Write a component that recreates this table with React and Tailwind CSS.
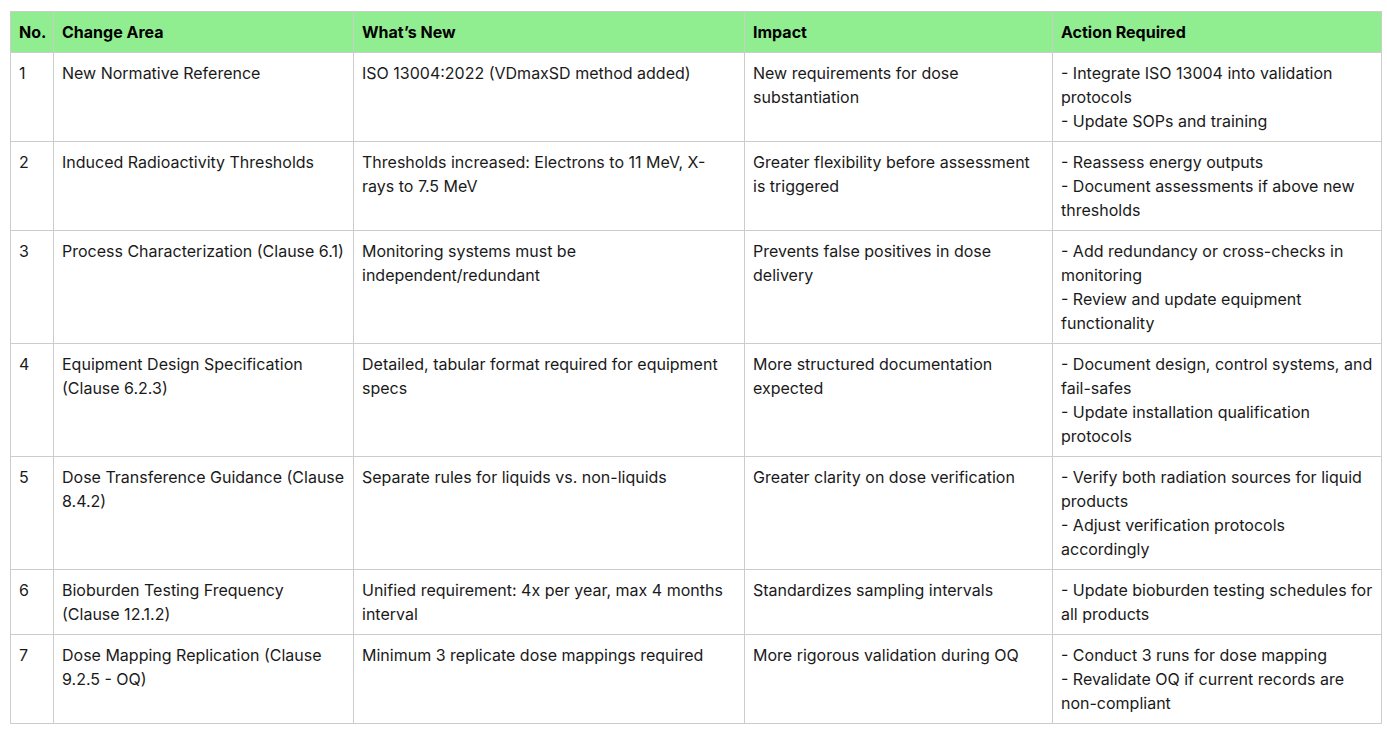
import React from 'react';

const rows = [
  ['1', 'New Normative Reference', 'ISO 13004:2022 (VDmaxSD method added)', 'New requirements for dose substantiation', ['- Integrate ISO 13004 into validation protocols', '- Update SOPs and training']],
  ['2', 'Induced Radioactivity Thresholds', 'Thresholds increased: Electrons to 11 MeV, X-rays to 7.5 MeV', 'Greater flexibility before assessment is triggered', ['- Reassess energy outputs', '- Document assessments if above new thresholds']],
  ['3', 'Process Characterization (Clause 6.1)', 'Monitoring systems must be independent/redundant', 'Prevents false positives in dose delivery', ['- Add redundancy or cross-checks in monitoring', '- Review and update equipment functionality']],
  ['4', 'Equipment Design Specification (Clause 6.2.3)', 'Detailed, tabular format required for equipment specs', 'More structured documentation expected', ['- Document design, control systems, and fail-safes', '- Update installation qualification protocols']],
  ['5', 'Dose Transference Guidance (Clause 8.4.2)', 'Separate rules for liquids vs. non-liquids', 'Greater clarity on dose verification', ['- Verify both radiation sources for liquid products', '- Adjust verification protocols accordingly']],
  ['6', 'Bioburden Testing Frequency (Clause 12.1.2)', 'Unified requirement: 4x per year, max 4 months interval', 'Standardizes sampling intervals', ['- Update bioburden testing schedules for all products']],
  ['7', 'Dose Mapping Replication (Clause 9.2.5 - OQ)', 'Minimum 3 replicate dose mappings required', 'More rigorous validation during OQ', ['- Conduct 3 runs for dose mapping', '- Revalidate OQ if current records are non-compliant']],
];

const cell = 'border border-[#cccccc] px-2 py-2 align-top text-left';

export default function App() {
  return (
    <div className="bg-white min-h-screen pl-[10px] pt-[11px] font-['Inter',sans-serif] text-base leading-6 text-[#1a1a1a]">
      <table className="table-fixed border-collapse w-[1371px]">
        <colgroup>
          <col className="w-[43px]" />
          <col className="w-[300px]" />
          <col className="w-[391px]" />
          <col className="w-[308px]" />
          <col className="w-[329px]" />
        </colgroup>
        <thead>
          <tr className="bg-[#90ee90] text-black">
            <th className={cell + ' font-bold'}>No.</th>
            <th className={cell + ' font-bold'}>Change Area</th>
            <th className={cell + ' font-bold'}>What’s New</th>
            <th className={cell + ' font-bold'}>Impact</th>
            <th className={cell + ' font-bold'}>Action Required</th>
          </tr>
        </thead>
        <tbody>
          {rows.map((r) => (
            <tr key={r[0]}>
              <td className={cell}>{r[0]}</td>
              <td className={cell}>{r[1]}</td>
              <td className={cell}>{r[2]}</td>
              <td className={cell}>{r[3]}</td>
              <td className={cell}>
                {r[4].map((a, i) => (
                  <div key={i}>{a}</div>
                ))}
              </td>
            </tr>
          ))}
        </tbody>
      </table>
    </div>
  );
}
